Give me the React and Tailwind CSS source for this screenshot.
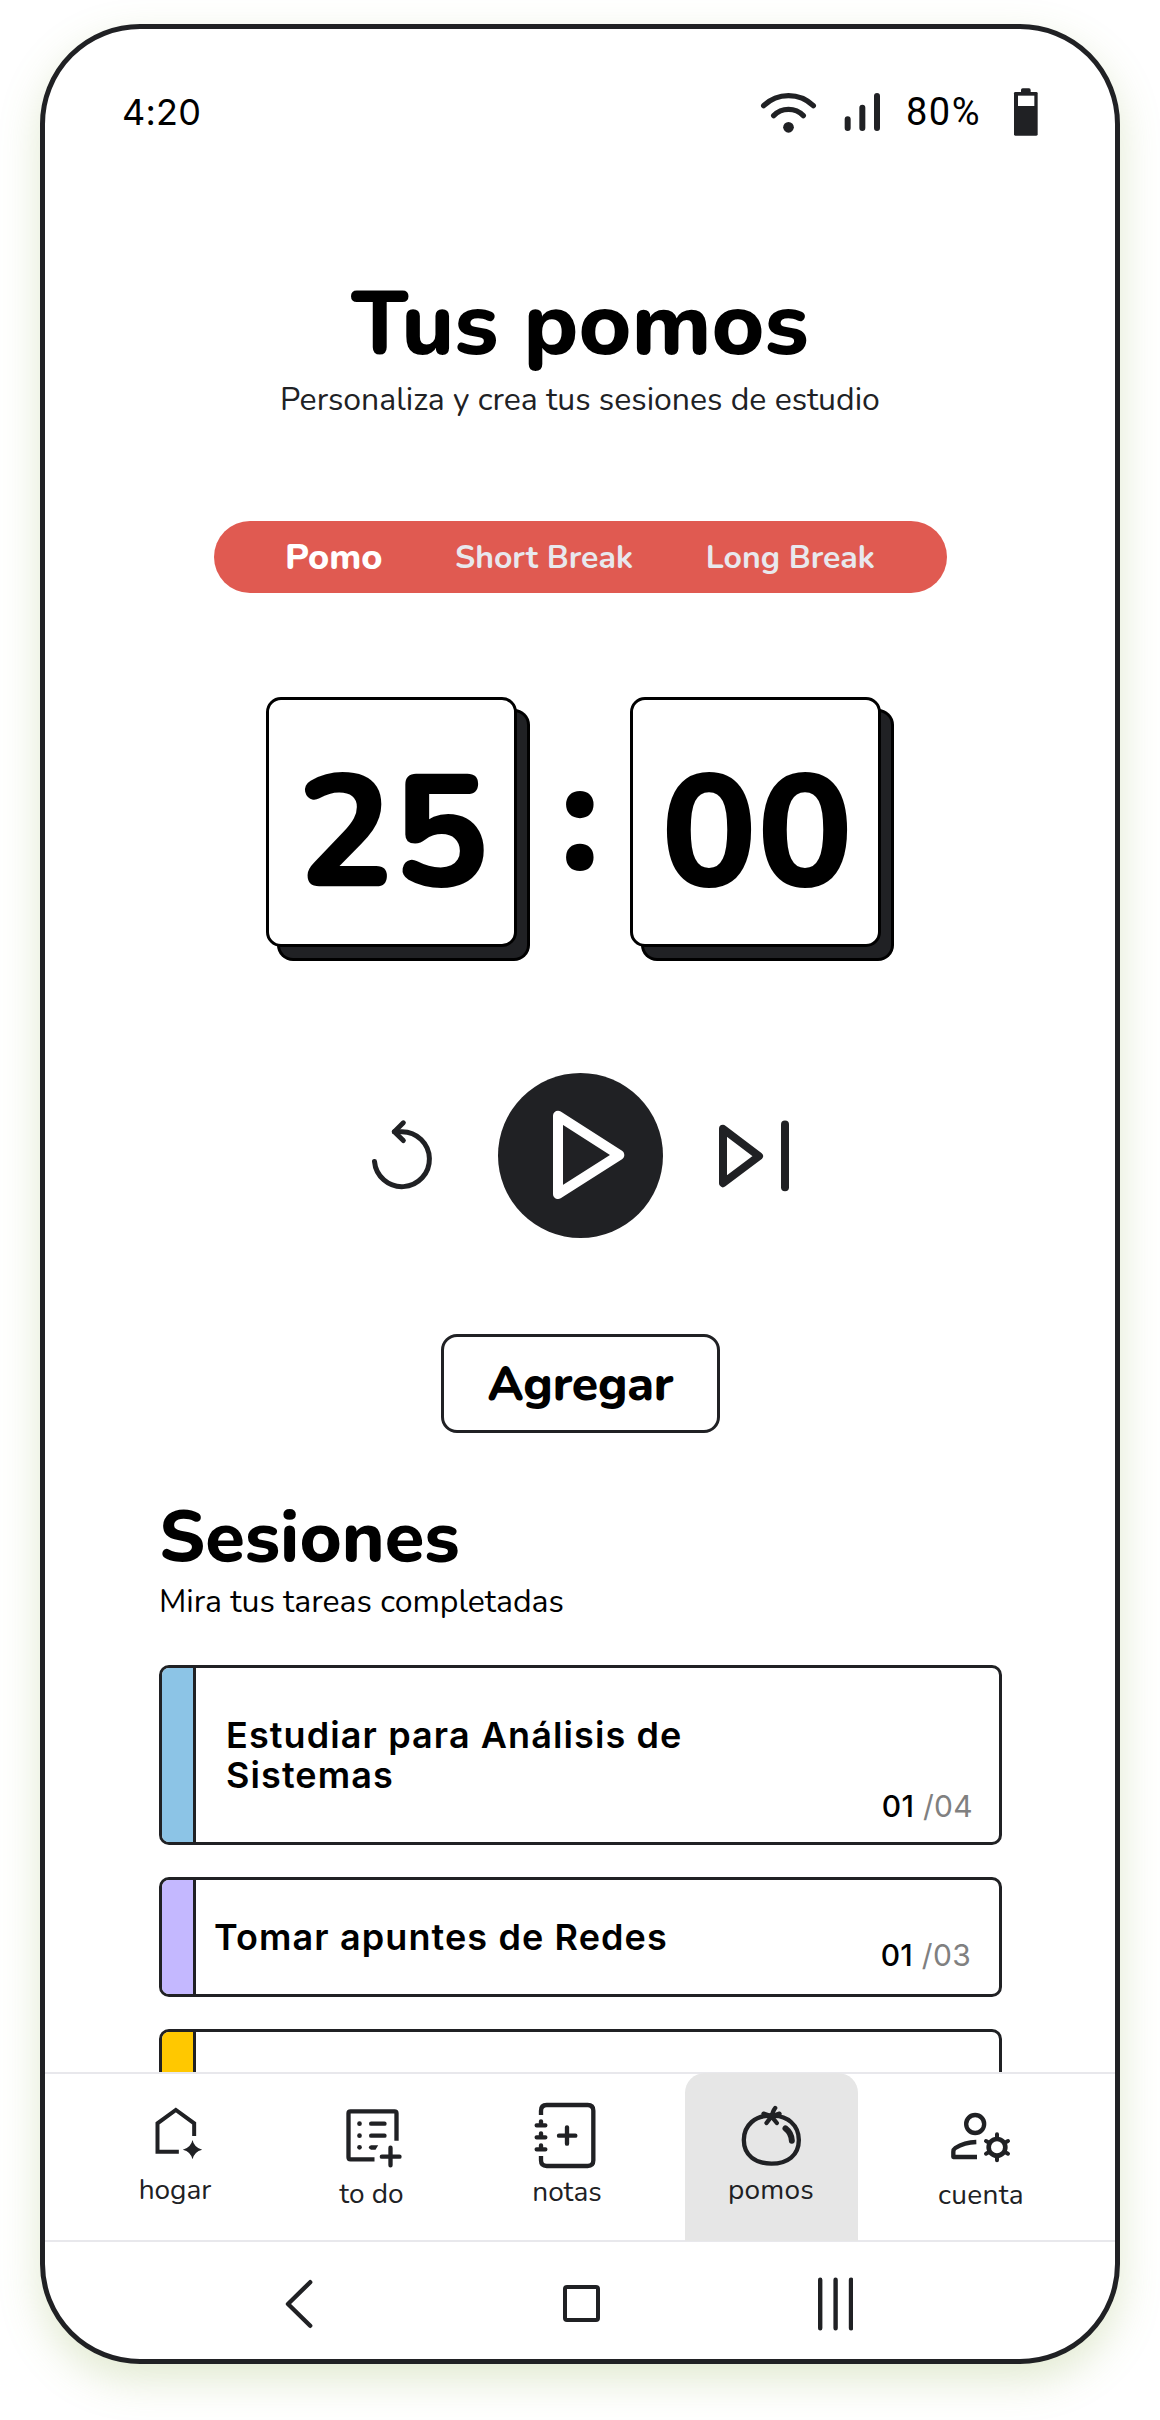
import React from "react";

const INK = "#202124";

function WifiIcon() {
  return (
    <svg width="57" height="50" viewBox="60 52 171 150" fill="none" stroke={INK} strokeWidth="16" strokeLinecap="round">
      <path d="M71 108 A107 107 0 0 1 220 108" />
      <path d="M101 138 A62 62 0 0 1 190 138" />
      <circle cx="145.500" cy="173" r="16" fill={INK} stroke="none" />
    </svg>
  );
}

function SignalIcon() {
  return (
    <svg width="38" height="50" viewBox="309 52 114 150" fill="none" stroke={INK} strokeWidth="18" strokeLinecap="round">
      <path d="M323 149V175M367 114V175M411 79V175" />
    </svg>
  );
}

function BatteryIcon() {
  return (
    <svg width="25" height="50" viewBox="819 52 75 150" fill={INK}>
      <rect x="843" y="56" width="29" height="20" rx="5" />
      <rect x="822" y="67" width="71" height="131" rx="4" />
      <rect x="834" y="78" width="49" height="31" fill="#fff" />
    </svg>
  );
}

function StatusBar() {
  return (
    <div className="mt-[47px] flex h-[72px] items-center pl-[77px] font-['Inter',sans-serif] text-[36px] text-black">
      <span className="w-[84px] tracking-[0.2px]">4:20</span>
      <div className="ml-[554px] flex items-center">
        <WifiIcon />
        <span className="ml-[26px] flex"><SignalIcon /></span>
        <span className="ml-[25px] w-[80px] font-['Roboto',sans-serif] text-[38px] tracking-[1.5px]">80%</span>
        <span className="ml-[27px] flex"><BatteryIcon /></span>
      </div>
    </div>
  );
}

function ModeTabs() {
  return (
    <div className="mx-auto mt-[101px] flex h-[72px] w-[733px] items-center justify-center gap-[72.6px] rounded-full bg-[#e05a51] pt-px text-[32px] font-bold text-[#e8e8ed]">
      <span className="text-[36px] font-extrabold text-white">Pomo</span>
      <span>Short Break</span>
      <span>Long Break</span>
    </div>
  );
}

function TimeCard({ value }) {
  return (
    <div className="flex h-[250px] w-[251px] items-center justify-center rounded-[15px] border-[3px] border-black bg-white pt-[21px] pl-[3px] shadow-[12px_13px_0_-2px_#202124,12px_13px_0_1px_#000]">
      {value}
    </div>
  );
}

function Timer() {
  return (
    <div className="mt-[104px] ml-[221px] flex h-[250px] items-center text-[160px] leading-[180px] font-extrabold text-black">
      <TimeCard value="25" />
      <span className="ml-[42px] w-[42px] pb-2.5">:</span>
      <div className="ml-[29px]"><TimeCard value="00" /></div>
    </div>
  );
}

function Controls() {
  return (
    <div className="mt-[126px] ml-[323px] flex h-[165px] items-center">
      <svg width="68" height="80" viewBox="84 226.5 204 240" fill="none" stroke={INK} strokeWidth="15" strokeLinecap="round" strokeLinejoin="round">
        <path d="M103.500 363A82.500 82.500 0 1 0 186 273.500H163" />
        <path d="M190 247L163 273.500L190 300" />
      </svg>
      <div className="ml-[62px] size-[165px] rounded-full bg-[#202124]">
        <svg width="165" height="165" viewBox="474 99 495 495" fill="none" stroke="#fff" strokeWidth="30" strokeLinejoin="round">
          <path d="M654 227L838 345L654 462Z" />
        </svg>
      </div>
      <svg className="ml-[53px]" width="76" height="80" viewBox="1128 226.5 228 240" fill="none" stroke={INK} strokeWidth="24" strokeLinecap="round" strokeLinejoin="round">
        <path d="M1149 265L1257 347L1149 428Z" />
        <path d="M1335 252V440" />
      </svg>
    </div>
  );
}

function Session({ color, title, titlePad, done, total, countPad, height }) {
  return (
    <div className={`flex overflow-hidden rounded-[10px] border-[3px] border-[#202124] bg-white font-['Inter',sans-serif] text-black ${height}`}>
      <div className={`w-[34px] shrink-0 border-r-[3px] border-[#202124] ${color}`} />
      <div className={`flex flex-1 items-center ${titlePad}`}>
        <p className="w-[500px] text-[36px] leading-[40px] font-semibold tracking-[1.1px]">{title}</p>
      </div>
      {done && (
        <p className={`self-end text-[30px] leading-[36px] tracking-[0.3px] ${countPad}`}>
          <span className="font-medium">{done}</span> <span className="text-[#808080]">/{total}</span>
        </p>
      )}
    </div>
  );
}

function HomeIcon() {
  return (
    <svg className="overflow-visible" width="60" height="70" viewBox="46.5 120 180 210" fill="none" stroke={INK} strokeWidth="12">
      <path d="M145 275H81V190L136 150L191 190V228" />
      <path d="M186 240Q191 263 215 269Q191 275 186 298Q181 275 157 269Q181 263 186 240Z" fill={INK} stroke="none" />
    </svg>
  );
}

function TodoIcon() {
  return (
    <svg className="overflow-visible" width="60" height="70" viewBox="634.5 120 180 210" fill="none" stroke={INK} strokeWidth="13">
      <path d="M732 298H660Q654 298 654 292V160Q654 154 660 154H792Q798 154 798 160V242" />
      <path d="M722 191H762M722 227H762" strokeLinecap="round" />
      <path d="M722 256H743L735 269H722Q715 267 715 262.500Q715 257 722 256Z" fill={INK} stroke="none" />
      <g fill={INK} stroke="none">
        <circle cx="687" cy="191" r="7" />
        <circle cx="687" cy="227" r="7" />
        <circle cx="687" cy="262" r="7" />
      </g>
      <path d="M754 290H807M780 263V316" strokeLinecap="round" />
    </svg>
  );
}

function NotesIcon() {
  return (
    <svg className="overflow-visible" width="60" height="70" viewBox="51 120 180 210" fill="none" stroke={INK} strokeWidth="13">
      <path d="M63 165V152Q63 135 80 135H203Q220 135 220 152V301Q220 318 203 318H80Q63 318 63 301V288" />
      <path d="M50 196H76M50 232H76M50 268H76M63 184V196M63 220V232M63 256V268M117 227H166M141 202V251" strokeLinecap="round" />
    </svg>
  );
}

function TomatoIcon() {
  return (
    <svg className="overflow-visible" width="60" height="70" viewBox="664.5 120 180 210" fill="none" stroke={INK} strokeWidth="13" strokeLinecap="round" strokeLinejoin="round">
      <path d="M753 168C705 164 670 196 670 240C670 286 705 311 753 311C801 311 835 286 835 240C835 196 800 164 753 168Z" />
      <path d="M764 144Q756 154 753 172M729 161L753 169L777 161M738 189L753 169L769 189" />
      <path d="M732 167H774" />
      <path d="M795 205Q813 219 814 242" strokeWidth="18" />
    </svg>
  );
}

function AccountIcon() {
  return (
    <svg className="overflow-visible" width="60" height="70" viewBox="453 120 180 210" fill="none" stroke={INK} strokeWidth="13">
      <circle cx="525.500" cy="192" r="27" />
      <path d="M529 246Q493 247 466 264Q460 268 460 275V291H531" strokeLinejoin="round" />
      <circle cx="591" cy="262" r="25" strokeWidth="14" />
      <path
        d="M591 233V223M591 291V301M616 247.500L624 243M616 276.500L624 281M566 247.500L558 243M566 276.500L558 281"
        strokeWidth="12"
        strokeLinecap="round"
      />
    </svg>
  );
}

function NavItem({ icon, label, className, labelClass }) {
  return (
    <div className={`flex w-[173px] flex-col items-center pt-[26px] ${className}`}>
      {icon}
      <span className={`text-[28px] leading-[36px] text-[#202124] ${labelClass}`}>{label}</span>
    </div>
  );
}

function BottomNav() {
  return (
    <nav className="flex h-[170px] shrink-0 border-y-2 border-[#e8e8ec] bg-white">
      <NavItem icon={<HomeIcon />} label="hogar" className="ml-[44px]" labelClass="mt-[2px] pr-px" />
      <NavItem icon={<TodoIcon />} label="to do" className="ml-[23px]" labelClass="mt-[6px]" />
      <NavItem icon={<NotesIcon />} label="notas" className="ml-[22.5px]" labelClass="mt-[4px]" />
      <NavItem icon={<TomatoIcon />} label="pomos" className="-my-px ml-[31.5px] rounded-t-[20px] bg-[#e6e6e6] pt-[27px]" labelClass="mt-[2px] pr-px tracking-[0.2px]" />
      <NavItem icon={<AccountIcon />} label="cuenta" className="ml-[36.5px]" labelClass="mt-[7px] tracking-[0.3px]" />
    </nav>
  );
}

function SystemBar() {
  return (
    <div className="flex flex-1 items-center pt-[6px] pl-[239px]">
      <svg width="30" height="54" viewBox="0 0 30 54" fill="none" stroke={INK} strokeWidth="4.4" strokeLinecap="round" strokeLinejoin="round">
        <path d="M26.200 5.200L4 27L26.200 48.800" />
      </svg>
      <div className="ml-[249px] size-[37px] rounded-[4px] border-4 border-[#202124]" />
      <svg className="ml-[218px]" width="35" height="54" viewBox="0 0 35 54" stroke={INK} strokeWidth="4.4" strokeLinecap="round">
        <path d="M2.200 2.700V51.300M17.600 2.700V51.300M33 2.700V51.300" />
      </svg>
    </div>
  );
}

export default function App() {
  return (
    <div className="h-[2420px] w-[1160px] overflow-hidden bg-white px-10 pt-6 font-['Nunito','Lato',sans-serif]">
      <div className="flex h-[2340px] w-[1080px] flex-col overflow-hidden rounded-[100px] border-[5px] border-[#202124] bg-white shadow-[0_16px_40px_0_rgba(139,171,71,0.25)]">
        <div className="h-[2043px] shrink-0 overflow-hidden">
          <StatusBar />
          <h1 className="mt-[122px] text-center text-[90px] leading-[110px] font-extrabold text-black">Tus pomos</h1>
          <p className="text-center text-[32px] leading-[40px] text-[#202124]">Personaliza y crea tus sesiones de estudio</p>
          <ModeTabs />
          <Timer />
          <Controls />
          <button className="mx-auto mt-[96px] flex h-[99px] w-[279px] items-center justify-center rounded-[16px] border-[3px] border-[#202124] pl-px text-[48px] font-extrabold tracking-[-0.2px] text-black">
            Agregar
          </button>
          <div className="mx-[114px] mt-[60px] w-[843px]">
            <h2 className="text-[72px] leading-[88px] font-extrabold text-black">Sesiones</h2>
            <p className="mt-px text-[32px] leading-[40px] text-black">Mira tus tareas completadas</p>
            <div className="mt-[43px] flex flex-col gap-8">
              <Session color="bg-[#8cc4e6]" title="Estudiar para Análisis de Sistemas" titlePad="pl-[30px]" done="01" total="04" countPad="pr-[26px] pb-[18px]" height="h-[180px]" />
              <Session color="bg-[#c4b8ff]" title="Tomar apuntes de Redes" titlePad="pl-[18px]" done="01" total="03" countPad="pr-[28px] pb-[21px]" height="h-[120px]" />
              <Session color="bg-[#ffc800]" height="h-[120px]" titlePad="" />
            </div>
          </div>
        </div>
        <BottomNav />
        <SystemBar />
      </div>
    </div>
  );
}
